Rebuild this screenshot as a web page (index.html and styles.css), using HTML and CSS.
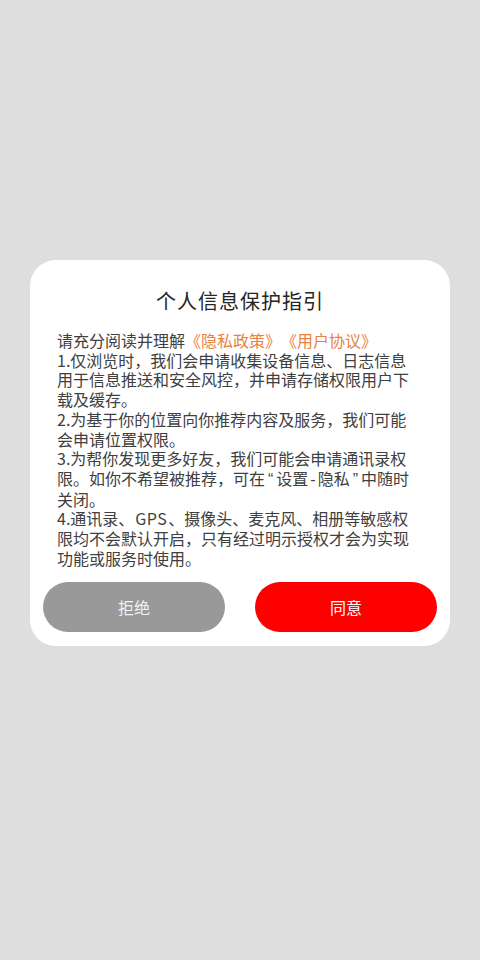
FILE: index.html
```html
<!DOCTYPE html>
<html lang="zh-CN">
<head>
<meta charset="utf-8">
<title>个人信息保护指引</title>
<link rel="stylesheet" href="styles.css">
</head>
<body>
<div class="dialog">
  <h1 class="title">个人信息保护指引</h1>
  <div class="content">
    <p>请充分阅读并理解<a class="link">《隐私政策》</a><a class="link">《用户协议》</a></p>
    <p>1.仅浏览时，我们会申请收集设备信息、日志信息用于信息推送和安全风控，并申请存储权限用户下载及缓存。</p>
    <p>2.为基于你的位置向你推荐内容及服务，我们可能会申请位置权限。</p>
    <p>3.为帮你发现更多好友，我们可能会申请通讯录权限。如你不希望被推荐，可在<span class="q">“</span>设置<span class="h">-</span>隐私<span class="q">”</span>中随时关闭。</p>
    <p>4.通讯录、<span class="latin">GPS</span>、摄像头、麦克风、相册等敏感权限均不会默认开启，只有经过明示授权才会为实现功能或服务时使用。</p>
  </div>
  <div class="actions">
    <button class="btn btn-refuse">拒绝</button>
    <button class="btn btn-agree">同意</button>
  </div>
</div>
</body>
</html>
```

FILE: styles.css
```css
html, body {
  margin: 0;
  padding: 0;
}
body {
  width: 480px;
  height: 960px;
  background: #dedede;
  font-family: "Noto Sans CJK SC", "Noto Sans", sans-serif;
  display: flex;
  flex-direction: column;
  align-items: center;
  padding-top: 260px;
  box-sizing: border-box;
}
.dialog {
  width: 420px;
  background: #ffffff;
  border-radius: 26px;
  box-sizing: border-box;
  padding: 27px 13px 14px;
}
.title {
  margin: 0;
  font-size: 20px;
  font-weight: normal;
  line-height: 28px;
  text-align: center;
  color: #262626;
  letter-spacing: 1px;
}
.content {
  margin: 16px 0 0 14px;
  width: 362px;
  font-size: 16px;
  line-height: 19.7px;
  color: #404040;
  text-spacing-trim: space-all;
}
.content p {
  margin: 0;
}
.link {
  color: #e9823f;
}
.q {
  font-family: "Liberation Sans", sans-serif;
  margin: 0 3px;
}
.h {
  font-family: "Liberation Sans", sans-serif;
  margin: 0 2px;
}
.latin {
  letter-spacing: 0.5px;
  margin: 0 1px;
}
.actions {
  display: flex;
  gap: 30px;
  margin-top: 14px;
}
.btn {
  flex: 1;
  height: 50px;
  border: none;
  border-radius: 25px;
  font-family: inherit;
  font-size: 16px;
  color: #ffffff;
  padding: 0;
}
.btn-refuse {
  background: #999999;
  color: #f2f2f2;
}
.btn-agree {
  background: #fe0000;
}
```
